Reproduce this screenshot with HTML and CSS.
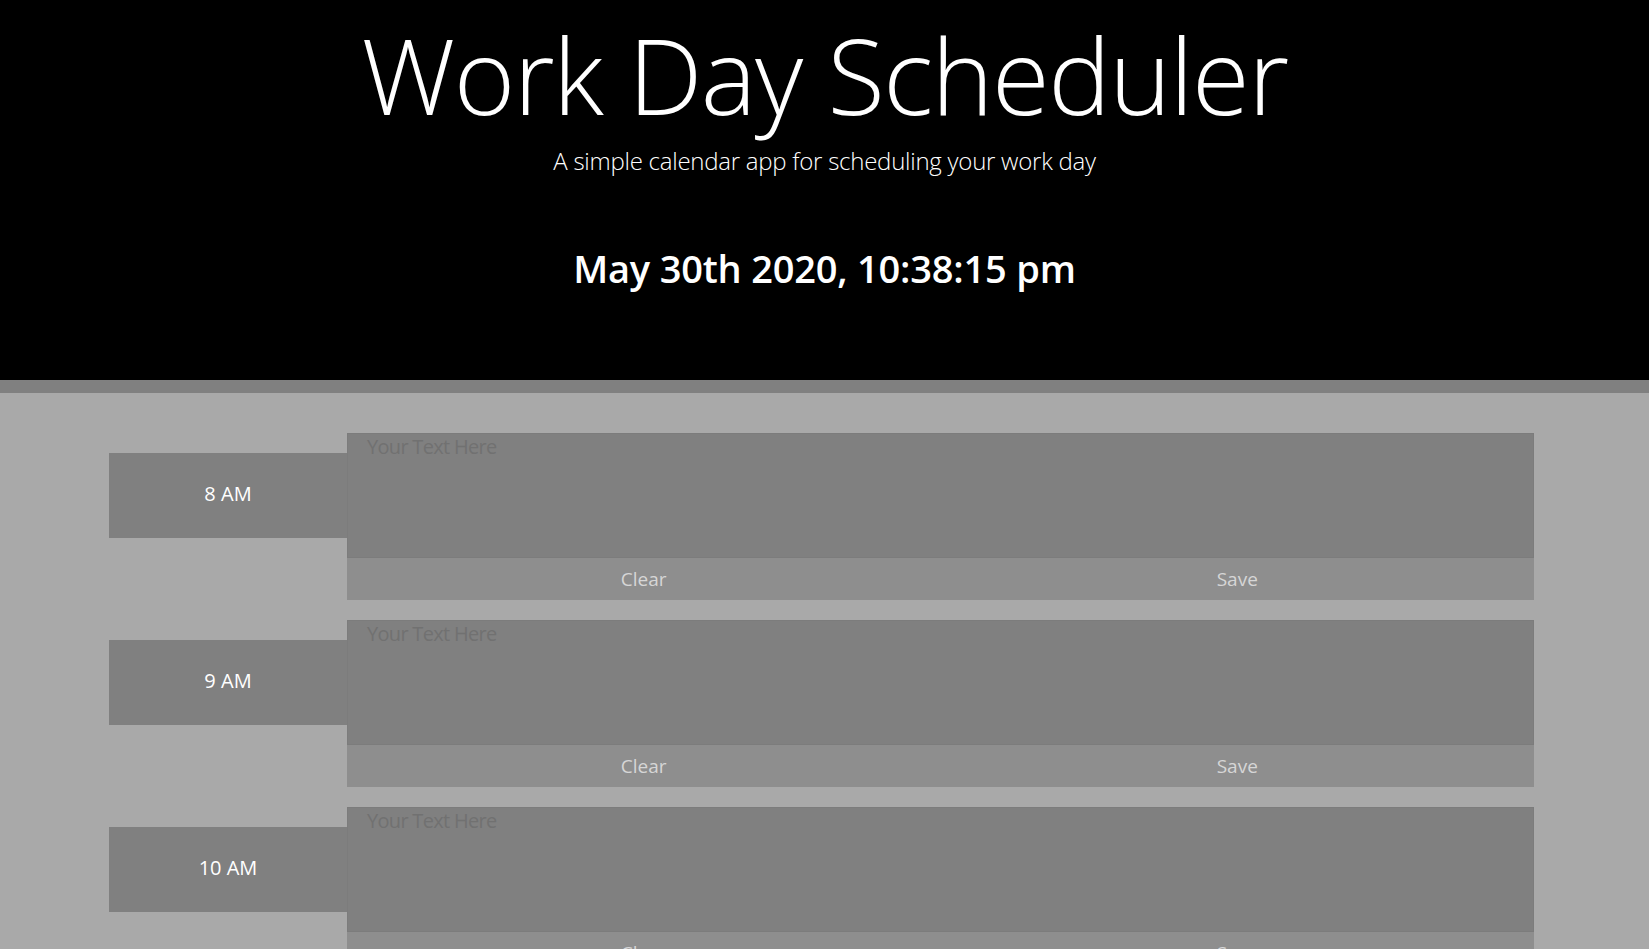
FILE: index.html
```html
<!DOCTYPE html>
<html lang="en">
<head>
<meta charset="utf-8">
<title>Work Day Scheduler</title>
<link rel="stylesheet" href="styles.css">
</head>
<body>
<header class="jumbotron">
  <h1 class="title">Work Day Scheduler</h1>
  <p class="lead">A simple calendar app for scheduling your work day</p>
  <p class="current-day">May 30th 2020, 10:38:15 pm</p>
</header>
<main class="container">
  <div class="time-block">
    <div class="hour">8 AM</div>
    <div class="entry">
      <textarea class="description" placeholder="Your Text Here"></textarea>
      <div class="actions"><button class="btn">Clear</button><button class="btn">Save</button></div>
    </div>
  </div>
  <div class="time-block">
    <div class="hour">9 AM</div>
    <div class="entry">
      <textarea class="description" placeholder="Your Text Here"></textarea>
      <div class="actions"><button class="btn">Clear</button><button class="btn">Save</button></div>
    </div>
  </div>
  <div class="time-block">
    <div class="hour">10 AM</div>
    <div class="entry">
      <textarea class="description" placeholder="Your Text Here"></textarea>
      <div class="actions"><button class="btn">Clear</button><button class="btn">Save</button></div>
    </div>
  </div>
  <div class="time-block">
    <div class="hour">11 AM</div>
    <div class="entry">
      <textarea class="description" placeholder="Your Text Here"></textarea>
      <div class="actions"><button class="btn">Clear</button><button class="btn">Save</button></div>
    </div>
  </div>
</main>
</body>
</html>
```

FILE: styles.css
```css
html, body {
  margin: 0;
  padding: 0;
}
html {
  overflow: hidden;
}
body {
  background: #a9a9a9;
  font-family: "Open Sans", "Noto Sans", sans-serif;
  color: #fff;
}
.jumbotron {
  background: #000;
  text-align: center;
  padding: 17px 0 89px;
  border-bottom: 13px solid #808080;
}
.title {
  margin: 0;
  font-size: 105px;
  line-height: 116px;
  font-weight: 300;
  letter-spacing: -1.5px;
}
.lead {
  margin: 16px 0 0;
  font-size: 24px;
  line-height: 24px;
  font-weight: 300;
  letter-spacing: -0.25px;
}
.current-day {
  margin: 72px 0 0;
  font-size: 38px;
  line-height: 46px;
  font-weight: 600;
  letter-spacing: -0.2px;
}
.container {
  width: 1425px;
  margin: 40px 0 0 109px;
  display: flex;
  flex-direction: column;
  gap: 20px;
}
.time-block {
  display: flex;
  align-items: flex-start;
}
.hour {
  box-sizing: border-box;
  width: 238px;
  height: 85px;
  margin-top: 20px;
  padding-bottom: 5px;
  background: #808080;
  display: flex;
  align-items: center;
  justify-content: center;
  font-size: 20px;
}
.entry {
  flex: 1;
  display: flex;
  flex-direction: column;
}
.description {
  display: block;
  box-sizing: border-box;
  height: 125px;
  width: 100%;
  margin: 0;
  padding: 1px 19px;
  border: 1px solid #7c7c7c;
  background: #808080;
  font-family: inherit;
  font-size: 20px;
  line-height: 24px;
  color: #fff;
  resize: none;
  outline: none;
}
.description::placeholder {
  color: #717171;
  letter-spacing: -0.7px;
}
.actions {
  display: flex;
  height: 42px;
  background: #8e8e8e;
}
.btn {
  flex: 1;
  border: 0;
  margin: 0;
  padding: 0;
  background: transparent;
  color: #d6d6d6;
  font-family: inherit;
  font-size: 19px;
}
```
